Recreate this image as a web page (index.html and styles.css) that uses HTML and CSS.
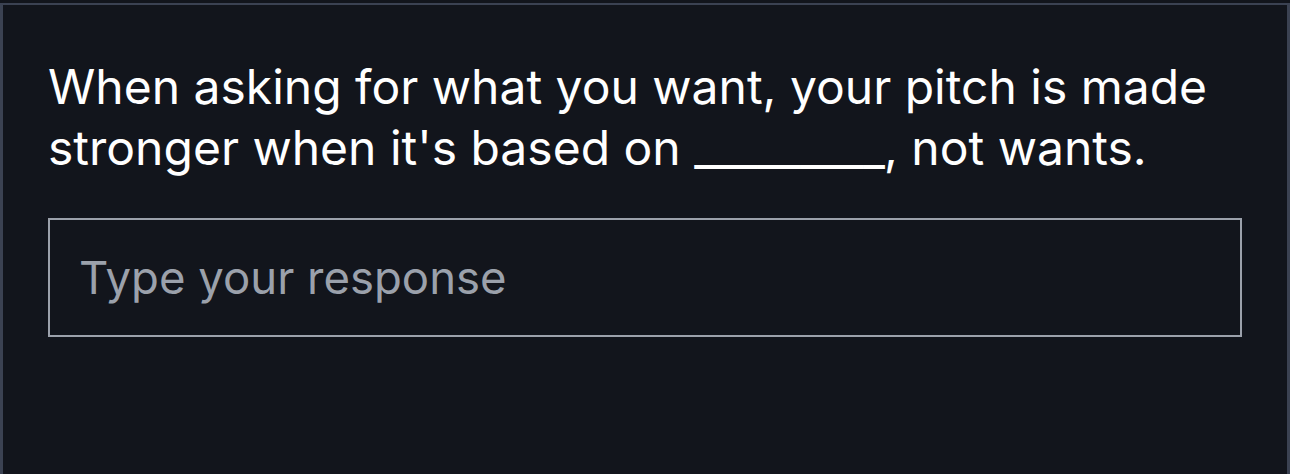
FILE: index.html
```html
<!DOCTYPE html>
<html>
<head>
<meta charset="utf-8">
<link rel="stylesheet" href="styles.css">
</head>
<body>
<div class="page">
  <div class="card">
    <p class="question">When asking for what you want, your pitch is made stronger when it's based on <span class="blank">_________</span>, not wants.</p>
    <input class="answer" type="text" placeholder="Type your response">
  </div>
</div>
</body>
</html>
```

FILE: styles.css
```css
html, body {
  margin: 0;
  padding: 0;
  background: #12151c;
  height: 100%;
}
body {
  font-family: Inter, "Noto Sans", sans-serif;
  overflow: hidden;
}
.page {
  padding-top: 3px;
  height: 100%;
  box-sizing: border-box;
}
.card {
  border: 3px solid #3b4252;
  border-top-width: 2px;
  border-bottom: none;
  height: 100%;
  box-sizing: border-box;
  padding: 51px 45px 0;
}
.question {
  margin: 0 0 40px;
  color: #ffffff;
  font-size: 48px;
  line-height: 61px;
  font-weight: 400;
}
.blank {
  letter-spacing: -0.8px;
}
.answer {
  display: block;
  width: 100%;
  box-sizing: border-box;
  height: 119px;
  border: 2px solid #9ba1ab;
  border-radius: 0;
  background: #12151c;
  color: #ffffff;
  font-family: Inter, "Noto Sans", sans-serif;
  font-size: 45.5px;
  padding: 0 29px;
  outline: none;
}
.answer::placeholder {
  color: #9ba1ab;
  opacity: 1;
}
```
